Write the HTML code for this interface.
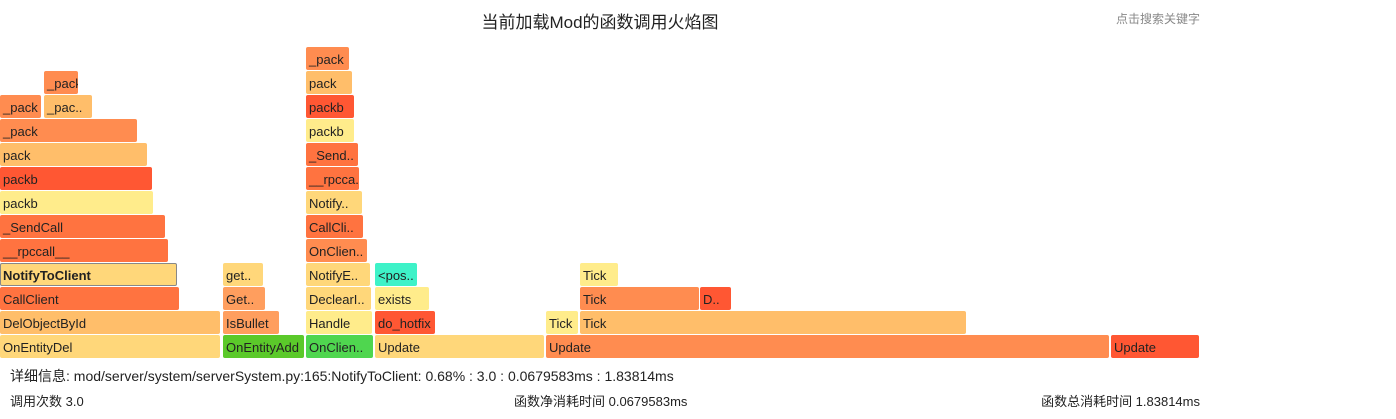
<!DOCTYPE html>
<html><head><meta charset="utf-8"><style>
body{margin:0;width:1396px;height:419px;background:#fff;position:relative;overflow:hidden;font-family:"Liberation Sans","Noto Sans CJK SC",sans-serif;color:#222}
.b{position:absolute;height:23px;border-radius:2px;font-size:13px;line-height:25px;padding-left:3px;box-sizing:border-box;white-space:nowrap;overflow:hidden;color:#222}
.t{position:absolute;white-space:nowrap}
</style></head><body>
<div class="t" style="left:0;width:1200px;text-align:center;top:8px;font-size:17px;color:#222">当前加载Mod的函数调用火焰图</div>
<div class="t" style="left:1116px;top:10px;font-size:12px;color:#888">点击搜索关键字</div>
<div id="c"></div>
<script>
var O='#FF8C50',L='#FFBE6A',R='#FF5733',Y='#FFEC8B',P='#FFD77A',M='#FF7340',Q='#FF9E5E';
var rows={335:[[0,220,P,'OnEntityDel'],[223,304,'#5BC92A','OnEntityAdd'],[306,373,'#4FD64F','OnClien..'],[375,544,P,'Update'],[546,1109,O,'Update'],[1111,1199,R,'Update']],
311:[[0,220,L,'DelObjectById'],[223,279,Q,'IsBullet'],[306,372,Y,'Handle'],[375,435,R,'do_hotfix'],[546,578,Y,'Tick'],[580,966,L,'Tick']],
287:[[0,179,M,'CallClient'],[223,265,Q,'Get..'],[306,371,P,'DeclearI..'],[375,429,Y,'exists'],[580,699,O,'Tick'],[700,731,R,'D..']],
263:[[0,177,P,'NotifyToClient',1],[223,263,P,'get..'],[306,370,P,'NotifyE..'],[375,417,'#3EF2C8','<pos..'],[580,618,Y,'Tick']],
239:[[0,168,M,'__rpccall__'],[306,367,O,'OnClien..']],
215:[[0,165,M,'_SendCall'],[306,363,M,'CallCli..']],
191:[[0,153,Y,'packb'],[306,362,P,'Notify..']],
167:[[0,152,R,'packb'],[306,359,M,'__rpcca..']],
143:[[0,147,L,'pack'],[306,358,M,'_Send..']],
119:[[0,137,O,'_pack'],[306,354,Y,'packb']],
95:[[0,41,O,'_pack'],[44,92,L,'_pac..'],[306,354,R,'packb']],
71:[[44,78,O,'_pack'],[306,352,L,'pack']],
47:[[306,349,O,'_pack']]};
var h='';
for(var y in rows)rows[y].forEach(function(b){
var s='left:'+b[0]+'px;top:'+y+'px;width:'+(b[1]-b[0])+'px;background:'+b[2];
if(b[4])s+=';border:1px solid #888;font-weight:bold;line-height:23px;padding-left:2px';
var t=b[3].replace(/</g,'&lt;');
h+='<div class="b" style="'+s+'">'+t+'</div>';});
document.getElementById('c').innerHTML=h;
</script>
<div class="t" style="left:10px;top:366px;font-size:14px">详细信息: mod/server/system/serverSystem.py:165:NotifyToClient: 0.68% : 3.0 : 0.0679583ms : 1.83814ms</div>
<div class="t" style="left:10px;top:391px;font-size:13px">调用次数 3.0</div>
<div class="t" style="left:514px;top:391px;font-size:13px">函数净消耗时间 0.0679583ms</div>
<div class="t" style="right:196px;top:391px;font-size:13px">函数总消耗时间 1.83814ms</div>
</body></html>
